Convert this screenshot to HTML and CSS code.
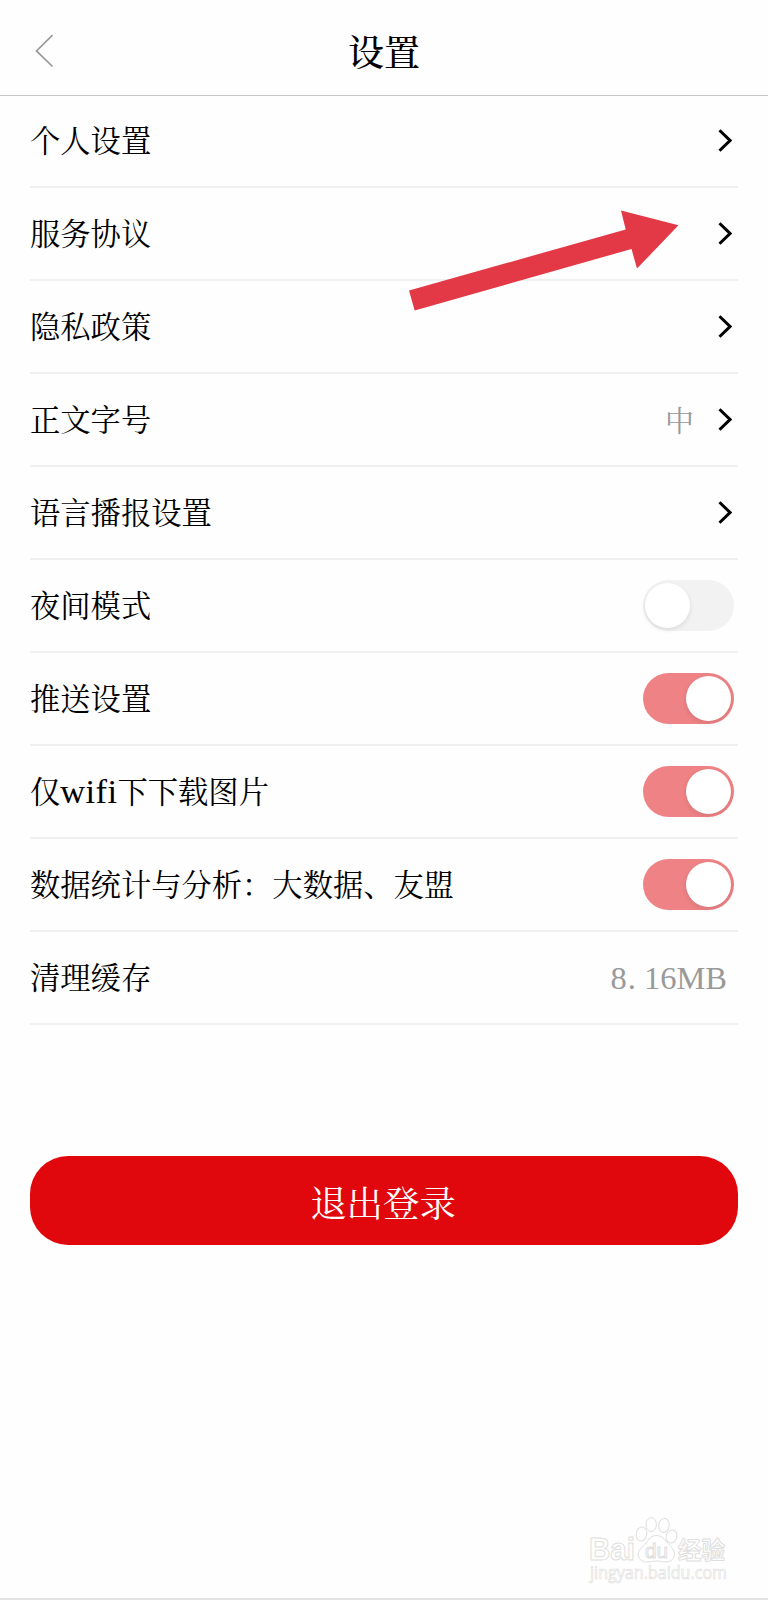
FILE: index.html
```html
<!DOCTYPE html>
<html lang="zh-CN">
<head>
<meta charset="utf-8">
<meta name="viewport" content="width=device-width">
<title>设置</title>
<link rel="stylesheet" href="styles.css">
</head>
<body>
<svg class="defs" width="0" height="0">
  <symbol id="chevron" viewBox="0 0 14 24"><path d="M1.500 1.200 12 11.500 1.500 21.800" fill="none" stroke="#000" stroke-width="3"/></symbol>
</svg>
<div class="screen">
  <header class="header">
    <svg class="back" viewBox="0 0 20 34"><path d="M18.5 1.200 2.500 16.900 18.500 32.500" fill="none" stroke="#999" stroke-width="1.7"/></svg>
    <h1 class="title">设置</h1>
  </header>
  <main class="list">
    <div class="row"><span class="label">个人设置</span><svg class="chevron"><use href="#chevron"/></svg></div>
    <div class="row"><span class="label">服务协议</span><svg class="chevron"><use href="#chevron"/></svg></div>
    <div class="row"><span class="label">隐私政策</span><svg class="chevron"><use href="#chevron"/></svg></div>
    <div class="row"><span class="label">正文字号</span><span class="size">中</span><svg class="chevron"><use href="#chevron"/></svg></div>
    <div class="row"><span class="label">语言播报设置</span><svg class="chevron"><use href="#chevron"/></svg></div>
    <div class="row"><span class="label">夜间模式</span><span class="toggle"><i class="knob"></i></span></div>
    <div class="row"><span class="label">推送设置</span><span class="toggle on"><i class="knob"></i></span></div>
    <div class="row"><span class="label">仅<span class="latin">wifi</span>下下载图片</span><span class="toggle on"><i class="knob"></i></span></div>
    <div class="row"><span class="label">数据统计与分析：大数据、友盟</span><span class="toggle on"><i class="knob"></i></span></div>
    <div class="row"><span class="label">清理缓存</span><span class="cache">8<span class="dot">.</span>16MB</span></div>
  </main>
  <button class="logout" type="button">退出登录</button>
  <svg class="arrow" viewBox="0 0 270 102"><path d="M0 81.5 216.7 20.5 212 1.5 269.5 16.3 228 59.5 222.5 40 5.7 101.5Z" fill="#e33946"/></svg>
  <svg class="watermark" viewBox="0 0 148 72">
    <g fill="#fff" stroke="#dedede" stroke-width="1">
      <text class="wm-bold" x="9" y="45" font-size="32" textLength="46" lengthAdjust="spacingAndGlyphs">Bai</text>
      <ellipse cx="61.5" cy="19" rx="5.3" ry="7" transform="rotate(10 61.5 19)"/>
      <ellipse cx="71.2" cy="9.5" rx="5.2" ry="7"/>
      <ellipse cx="84" cy="10.5" rx="5.2" ry="7" transform="rotate(10 84 10.5)"/>
      <ellipse cx="91.5" cy="21.5" rx="5.3" ry="6.5" transform="rotate(15 91.5 21.5)"/>
      <path d="M76.500 20.500c7 0 9 6 14 11 7 6 4 15-4 15.500-4 0-6-1-10-1s-6 1-10 1c-9-.5-11-9.500-4-15.500 6-5 7-11 14-11Z"/>
      <text class="wm-du" x="65" y="43" font-size="20" textLength="23" lengthAdjust="spacingAndGlyphs">du</text>
      <text class="wm-cjk" x="98" y="44" font-size="24" textLength="47" lengthAdjust="spacingAndGlyphs">经验</text>
      <text class="wm-url" x="10" y="64" font-size="19" textLength="137" lengthAdjust="spacingAndGlyphs">jingyan.baidu.com</text>
    </g>
  </svg>
</div>
</body>
</html>
```

FILE: styles.css
```css
* { box-sizing: border-box; }

body {
  margin: 0;
  background: #fefefe;
  color: #000;
  font-family: "Noto Serif CJK SC", "Noto Sans CJK SC", "Liberation Serif", serif;
  font-weight: 400;
}

.defs { position: absolute; }

.screen {
  position: relative;
  display: flex;
  flex-direction: column;
  width: 768px;
  height: 1600px;
  overflow: hidden;
  border-bottom: 2px solid #e3e3e3;
}

.header {
  display: grid;
  grid-template-columns: 100px 1fr 100px;
  align-items: center;
  height: 96px;
  padding-top: 7px;
  border-bottom: 1px solid #c8c8c8;
}

.back { width: 20px; height: 34px; margin: 0 0 0 34px; }

.title {
  margin: 0;
  padding-bottom: 1px;
  font-size: 36px;
  font-weight: 500;
  line-height: 52px;
  text-align: center;
}

.list { margin: -1px 30px 0; }

.row {
  display: flex;
  align-items: center;
  height: 93px;
  border-bottom: 2px solid #f0f0f0;
  white-space: nowrap;
}

.label {
  flex: 1;
  padding-bottom: 4px;
  font-size: 30.3px;
  font-weight: 400;
  line-height: 44px;
}

.latin {
  font-family: "Liberation Serif", serif;
  font-size: 34.5px;
  letter-spacing: .4px;
  line-height: 1;
}

.size { margin-right: 24px; color: #999; font-size: 29px; line-height: 44px; }

.chevron { width: 14px; height: 24px; margin-right: 6px; }

.toggle {
  display: flex;
  align-items: center;
  width: 91px;
  height: 51px;
  margin-right: 4px;
  padding: 0 2px;
  border-radius: 26px;
  background: #f2f2f2;
}

.toggle.on { justify-content: flex-end; padding-right: 3px; background: #ee8285; }

.knob {
  width: 45px;
  height: 45px;
  border-radius: 50%;
  background: #fff;
  box-shadow: 0 2px 5px rgba(0, 0, 0, .1);
}

.cache {
  margin-right: 11px;
  color: #999;
  font-family: "Liberation Serif", serif;
  font-size: 32.5px;
  line-height: 40px;
}

.dot { margin: 0 8px 0 1px; }

.logout {
  height: 89px;
  margin: 131px 30px 0;
  padding: 0 2px 0 0;
  border: 0;
  border-radius: 38px;
  background: #e0080d;
  color: #fff;
  font: inherit;
  font-size: 36.4px;
  line-height: 52px;
}

.arrow { position: absolute; left: 409px; top: 209px; width: 270px; height: 102px; }

.watermark { position: absolute; left: 580px; top: 1515px; width: 148px; height: 72px; }

.wm-bold { font-family: "Liberation Sans", sans-serif; font-weight: 700; }
.wm-du { font-family: "Liberation Sans", sans-serif; }
.wm-cjk { font-family: "Noto Sans CJK SC", sans-serif; font-weight: 700; }
.wm-url { font-family: "Open Sans", sans-serif; stroke-width: .7; }
```
